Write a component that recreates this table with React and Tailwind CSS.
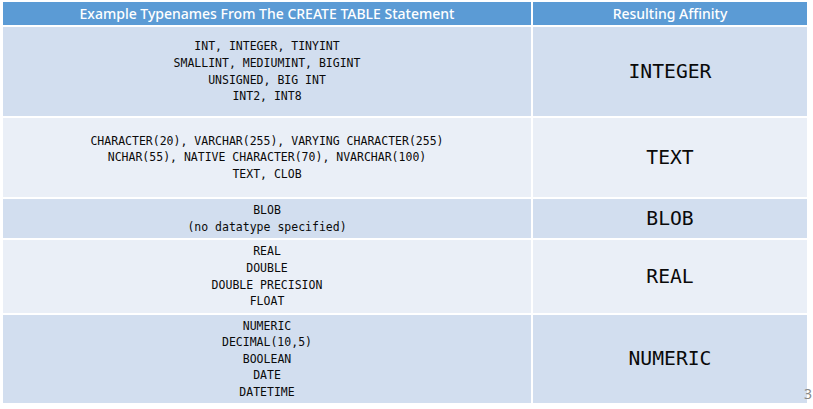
import React from "react";

const rows = [
  { h: "h-[89px]", bg: "bg-[#D2DEEF]", left: ["INT, INTEGER, TINYINT", "SMALLINT, MEDIUMINT, BIGINT", "UNSIGNED, BIG INT", "INT2, INT8"], right: "INTEGER" },
  { h: "h-[79px]", bg: "bg-[#EAEFF7]", left: ["CHARACTER(20), VARCHAR(255), VARYING CHARACTER(255)", "NCHAR(55), NATIVE CHARACTER(70), NVARCHAR(100)", "TEXT, CLOB"], right: "TEXT" },
  { h: "h-[39px]", bg: "bg-[#D2DEEF]", left: ["BLOB", "(no datatype specified)"], right: "BLOB" },
  { h: "h-[73px]", bg: "bg-[#EAEFF7]", left: ["REAL", "DOUBLE", "DOUBLE PRECISION", "FLOAT"], right: "REAL" },
  { h: "h-[88px]", bg: "bg-[#D2DEEF]", left: ["NUMERIC", "DECIMAL(10,5)", "BOOLEAN", "DATE", "DATETIME"], right: "NUMERIC" },
];

export default function App() {
  return (
    <div className="relative w-[813px] h-[409px] overflow-hidden bg-white pt-[2px] pl-[3px]">
      <div className="grid grid-cols-[528px_274px] gap-[2px] w-[804px]">
        <div className="h-[23px] bg-[#5B9BD5] text-white flex items-center justify-center text-[14px] font-medium font-['Noto_Sans','Open_Sans',sans-serif]">
          Example Typenames From The CREATE TABLE Statement
        </div>
        <div className="h-[23px] bg-[#5B9BD5] text-white flex items-center justify-center text-[14px] font-medium font-['Noto_Sans','Open_Sans',sans-serif]">
          Resulting Affinity
        </div>
        {rows.map((r, i) => (
          <React.Fragment key={i}>
            <div className={`${r.h} ${r.bg} flex flex-col items-center justify-center text-[11.5px] leading-[16.6px] text-[#0a0a0a] font-['DejaVu_Sans_Mono','Liberation_Mono',monospace]`}>
              {r.left.map((l, j) => (
                <div key={j} className="whitespace-pre">{l}</div>
              ))}
            </div>
            <div className={`${r.h} ${r.bg} flex items-center justify-center text-[19.7px] text-[#0a0a0a] font-['DejaVu_Sans_Mono','Liberation_Mono',monospace]`}>
              {r.right}
            </div>
          </React.Fragment>
        ))}
      </div>
      <div className="absolute left-[804px] top-[383px] text-[14px] text-[#888] font-['Noto_Sans',sans-serif]">
        3
      </div>
    </div>
  );
}
